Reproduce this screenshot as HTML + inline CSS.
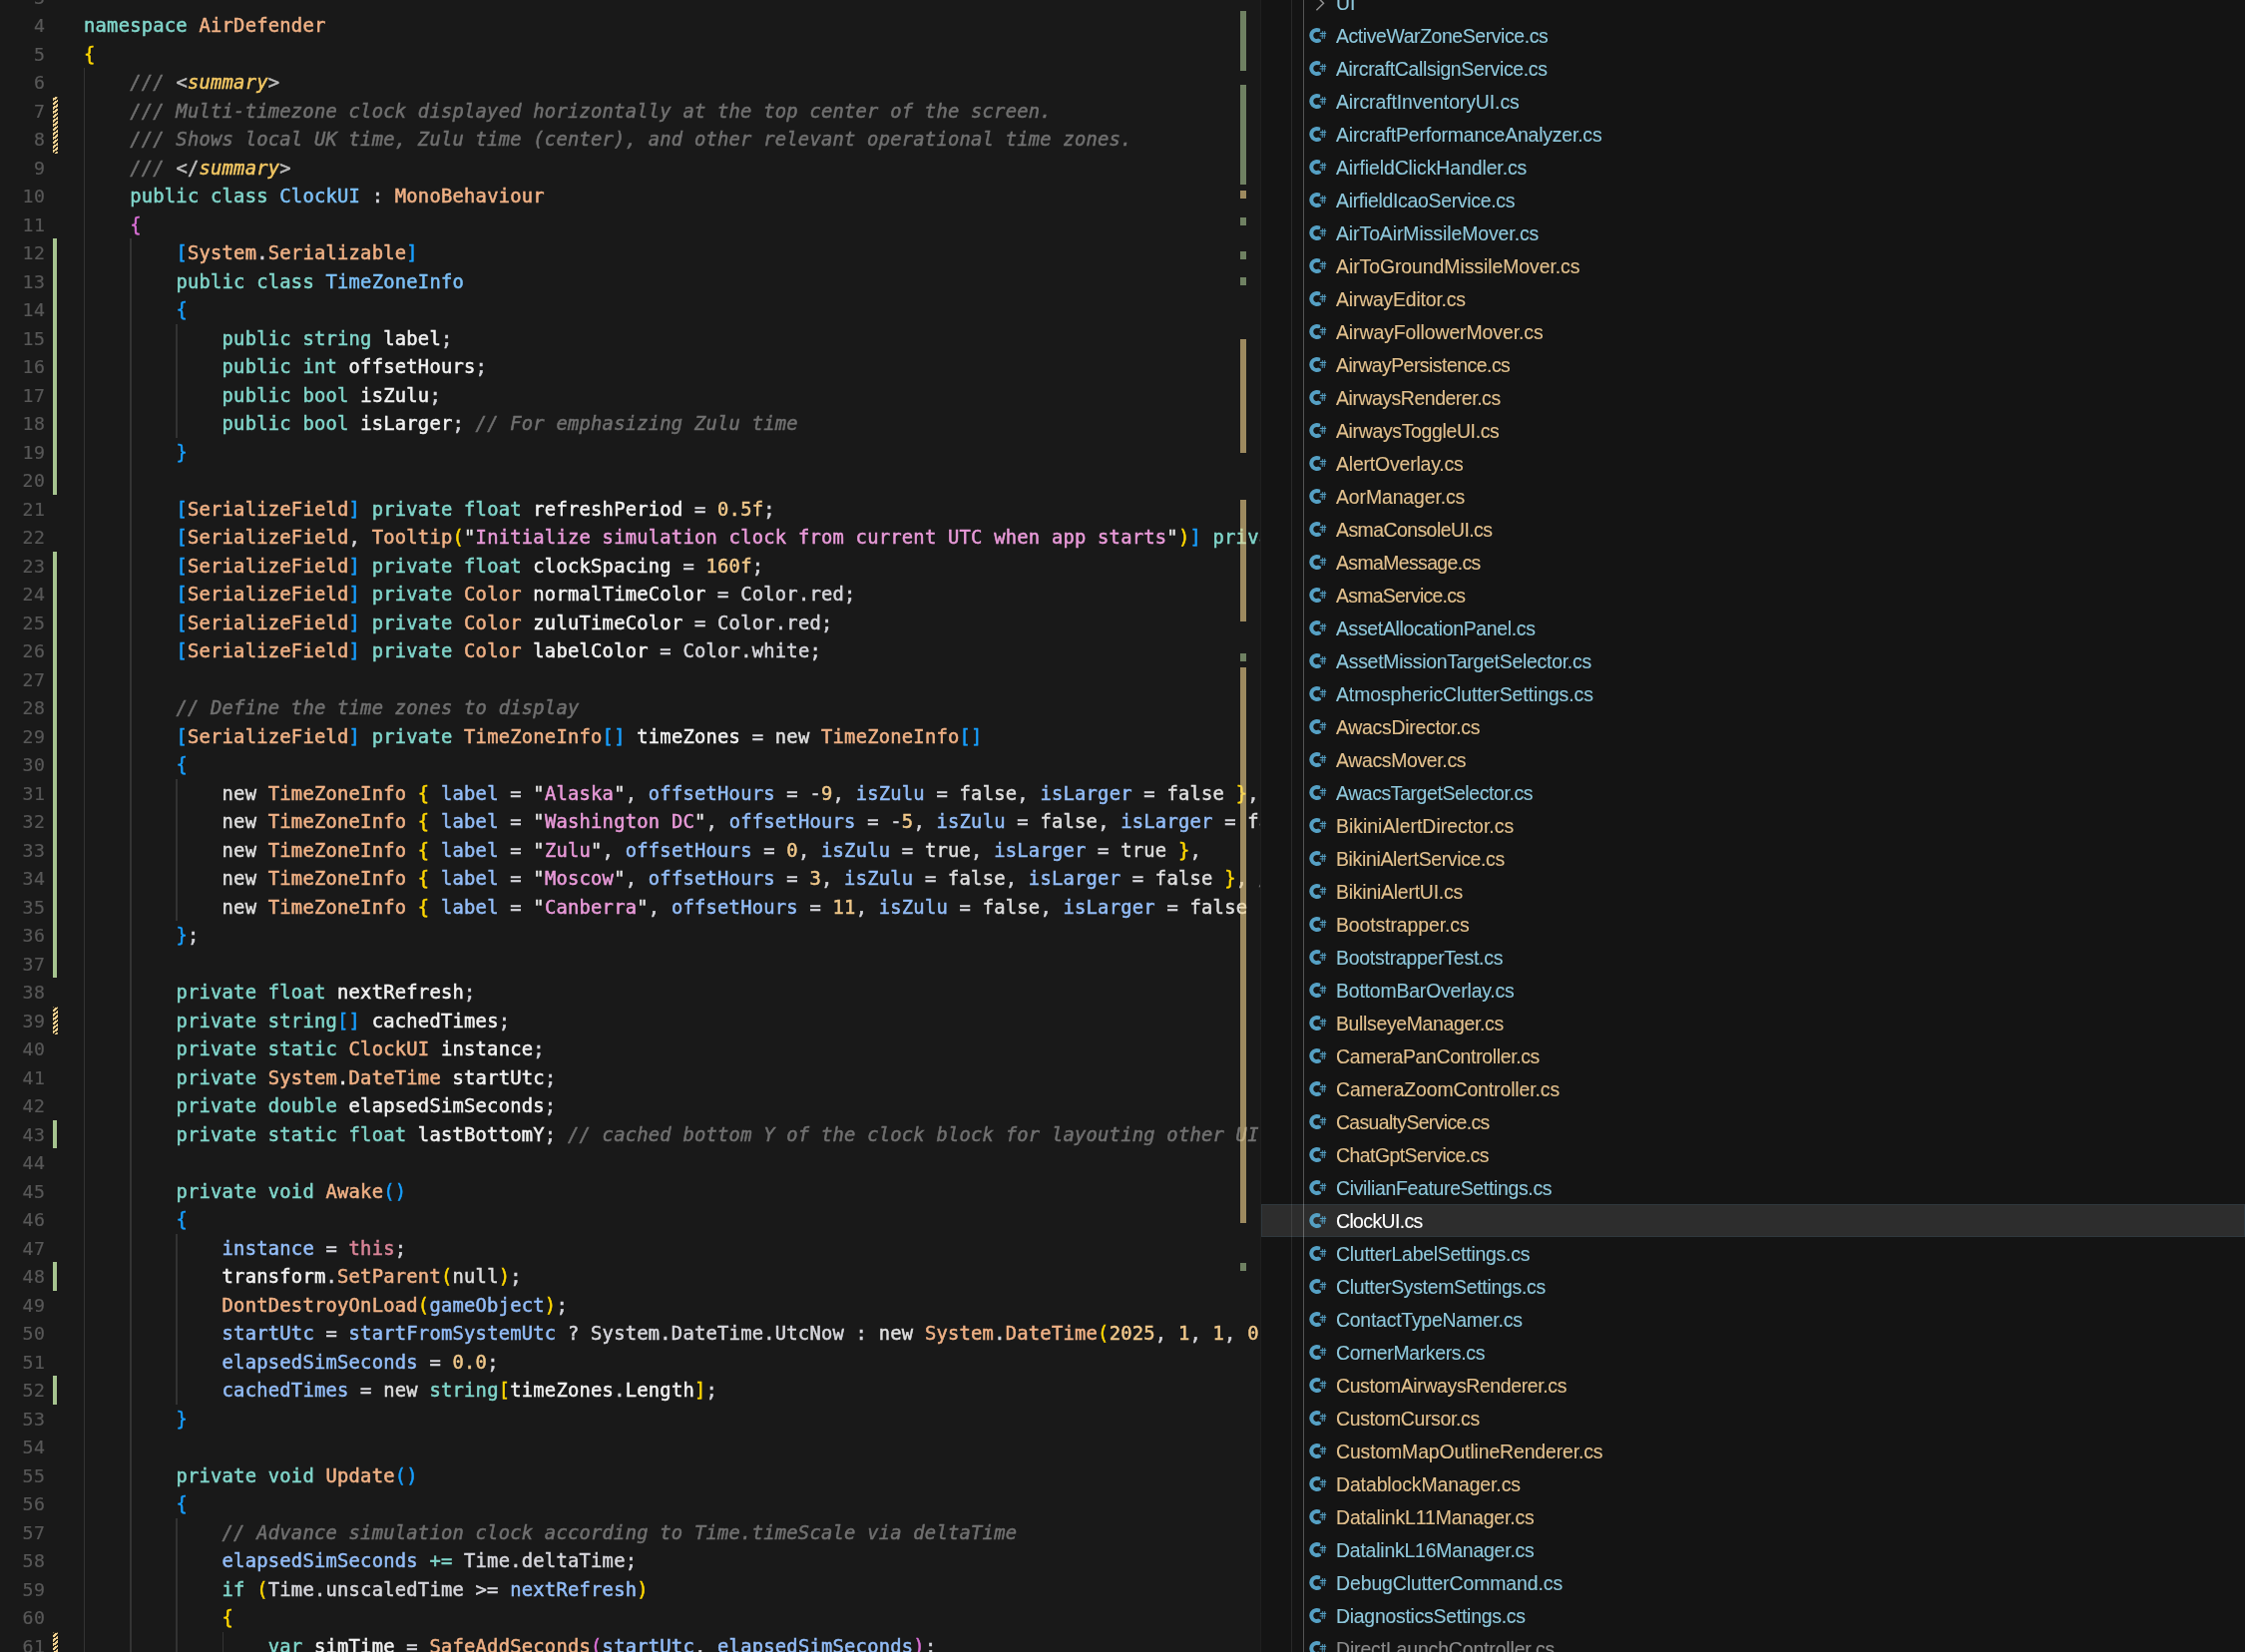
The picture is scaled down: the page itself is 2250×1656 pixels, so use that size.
<!DOCTYPE html>
<html lang="en"><head><meta charset="utf-8"><title>ClockUI.cs - AirDefender</title>
<style>

html,body{margin:0;padding:0;background:#191919;}
body{width:2250px;height:1656px;position:relative;overflow:hidden;}
#ed{position:absolute;left:0;top:0;width:1263px;height:1656px;background:#191919;overflow:hidden;}
#sb{position:absolute;left:1264px;top:0;width:986px;height:1656px;background:#141414;overflow:hidden;}
#sep{position:absolute;left:1263px;top:0;width:1px;height:1656px;background:#1f1f1f;}
.ln{position:absolute;left:0;width:45.5px;text-align:right;color:#585858;white-space:pre;}
.cl{position:absolute;white-space:pre;color:#d6d6dc;}
.ln,.cl{font-family:"DejaVu Sans Mono", "Liberation Mono", monospace;font-size:18.8px;letter-spacing:0.2385px;line-height:28.5px;height:28.5px;font-kerning:none;font-variant-ligatures:none;-webkit-text-stroke:0.5px;}
.ln{font-size:18.2px;letter-spacing:0.59px;-webkit-text-stroke:0.2px;}
.k{color:#80d6cb}.t{color:#f0b185}.c{color:#7cc0f7}.p{color:#93bdf8}.s{color:#e99ad9}.q{color:#e4e4e4}
.n{color:#f0c88a}.m{color:#707070;font-style:italic}.x{color:#f2c763;font-style:italic}
.xp{color:#bcbcbc}.nw{color:#dedede}.w{color:#f2f2f2}.g{color:#d6d6dc}.b1{color:#ffd700}.b2{color:#da70d6}.b3{color:#179fff}.th{color:#d98498}
.ig{position:absolute;width:1.4px;background:#333333;}
.ga{position:absolute;left:53px;width:4px;background:#a6c48f;}
.gm{position:absolute;left:52.5px;width:5.5px;background:repeating-linear-gradient(-36deg,#f0d090 0,#f0d090 2.1px,#2a2519 2.1px,#2a2519 3.5px);border-radius:1.5px;}
.ov{position:absolute;left:1243px;width:6px;}
.og{background:rgba(168,199,146,.6)}.ot{background:rgba(245,214,142,.6)}
.row{position:absolute;left:0;width:986px;height:33px;}
.row .nm{position:absolute;left:75px;top:0;height:33px;line-height:33px;white-space:pre;font-family:"Liberation Sans",sans-serif;font-size:19.4px;font-kerning:normal;-webkit-text-stroke:0.12px;}
.row svg{position:absolute;left:47px;top:7px;}
.u{color:#8ec8dc}.mo{color:#e2c08d}.ig2{color:#8c8c8c}.se{color:#ffffff}
.sel{background:#2d2d2d;box-shadow:inset 0 0 0 1px #2f383d;}
.gl{position:absolute;left:0;top:0;width:100%;height:100%;will-change:transform;}
.sg{position:absolute;top:0;width:1px;height:1656px;}

</style></head><body>
<div id="ed">
<div class="ga" style="top:239.0px;height:256.5px"></div>
<div class="ga" style="top:552.5px;height:427.5px"></div>
<div class="ga" style="top:1122.5px;height:28.5px"></div>
<div class="ga" style="top:1265.0px;height:28.5px"></div>
<div class="ga" style="top:1379.0px;height:28.5px"></div>
<div class="gm" style="top:96.5px;height:57.0px"></div>
<div class="gm" style="top:1008.5px;height:28.5px"></div>
<div class="gm" style="top:1635.5px;height:28.5px"></div>
<div class="ig" style="left:84.00px;top:68.0px;height:1596.0px"></div>
<div class="ig" style="left:130.18px;top:239.0px;height:1425.0px"></div>
<div class="ig" style="left:176.37px;top:324.5px;height:114.0px"></div>
<div class="ig" style="left:176.37px;top:780.5px;height:142.5px"></div>
<div class="ig" style="left:176.37px;top:1236.5px;height:171.0px"></div>
<div class="ig" style="left:176.37px;top:1521.5px;height:142.5px"></div>
<div class="ig" style="left:222.55px;top:1635.5px;height:28.5px"></div>
<div class="gl">
<div class="ln" style="top:-16.5px">3</div>
<div class="ln" style="top:12.0px">4</div>
<div class="cl" style="left:84px;top:12.0px"><span class="k">namespace</span> <span class="t">AirDefender</span></div>
<div class="ln" style="top:40.5px">5</div>
<div class="cl" style="left:84px;top:40.5px"><span class="b1">{</span></div>
<div class="ln" style="top:69.0px">6</div>
<div class="cl" style="left:84px;top:69.0px">    <span class="m">/// </span><span class="xp">&lt;</span><span class="x">summary</span><span class="xp">&gt;</span></div>
<div class="ln" style="top:97.5px">7</div>
<div class="cl" style="left:84px;top:97.5px">    <span class="m">/// Multi-timezone clock displayed horizontally at the top center of the screen.</span></div>
<div class="ln" style="top:126.0px">8</div>
<div class="cl" style="left:84px;top:126.0px">    <span class="m">/// Shows local UK time, Zulu time (center), and other relevant operational time zones.</span></div>
<div class="ln" style="top:154.5px">9</div>
<div class="cl" style="left:84px;top:154.5px">    <span class="m">/// </span><span class="xp">&lt;/</span><span class="x">summary</span><span class="xp">&gt;</span></div>
<div class="ln" style="top:183.0px">10</div>
<div class="cl" style="left:84px;top:183.0px">    <span class="k">public class </span><span class="c">ClockUI</span> : <span class="t">MonoBehaviour</span></div>
<div class="ln" style="top:211.5px">11</div>
<div class="cl" style="left:84px;top:211.5px">    <span class="b2">{</span></div>
<div class="ln" style="top:240.0px">12</div>
<div class="cl" style="left:84px;top:240.0px">        <span class="b3">[</span><span class="t">System</span>.<span class="t">Serializable</span><span class="b3">]</span></div>
<div class="ln" style="top:268.5px">13</div>
<div class="cl" style="left:84px;top:268.5px">        <span class="k">public class </span><span class="c">TimeZoneInfo</span></div>
<div class="ln" style="top:297.0px">14</div>
<div class="cl" style="left:84px;top:297.0px">        <span class="b3">{</span></div>
<div class="ln" style="top:325.5px">15</div>
<div class="cl" style="left:84px;top:325.5px">            <span class="k">public string </span><span class="w">label</span>;</div>
<div class="ln" style="top:354.0px">16</div>
<div class="cl" style="left:84px;top:354.0px">            <span class="k">public int </span><span class="w">offsetHours</span>;</div>
<div class="ln" style="top:382.5px">17</div>
<div class="cl" style="left:84px;top:382.5px">            <span class="k">public bool </span><span class="w">isZulu</span>;</div>
<div class="ln" style="top:411.0px">18</div>
<div class="cl" style="left:84px;top:411.0px">            <span class="k">public bool </span><span class="w">isLarger</span>; <span class="m">// For emphasizing Zulu time</span></div>
<div class="ln" style="top:439.5px">19</div>
<div class="cl" style="left:84px;top:439.5px">        <span class="b3">}</span></div>
<div class="ln" style="top:468.0px">20</div>
<div class="ln" style="top:496.5px">21</div>
<div class="cl" style="left:84px;top:496.5px">        <span class="b3">[</span><span class="t">SerializeField</span><span class="b3">]</span> <span class="k">private float </span><span class="w">refreshPeriod</span> = <span class="n">0.5f</span>;</div>
<div class="ln" style="top:525.0px">22</div>
<div class="cl" style="left:84px;top:525.0px">        <span class="b3">[</span><span class="t">SerializeField</span>, <span class="t">Tooltip</span><span class="b1">(</span><span class="q">"</span><span class="s">Initialize simulation clock from current UTC when app starts</span><span class="q">"</span><span class="b1">)</span><span class="b3">]</span> <span class="k">private bool </span><span class="w">startFromSystemUtc</span> = <span class="nw">true</span>;</div>
<div class="ln" style="top:553.5px">23</div>
<div class="cl" style="left:84px;top:553.5px">        <span class="b3">[</span><span class="t">SerializeField</span><span class="b3">]</span> <span class="k">private float </span><span class="w">clockSpacing</span> = <span class="n">160f</span>;</div>
<div class="ln" style="top:582.0px">24</div>
<div class="cl" style="left:84px;top:582.0px">        <span class="b3">[</span><span class="t">SerializeField</span><span class="b3">]</span> <span class="k">private </span><span class="t">Color</span> <span class="w">normalTimeColor</span> = Color.red;</div>
<div class="ln" style="top:610.5px">25</div>
<div class="cl" style="left:84px;top:610.5px">        <span class="b3">[</span><span class="t">SerializeField</span><span class="b3">]</span> <span class="k">private </span><span class="t">Color</span> <span class="w">zuluTimeColor</span> = Color.red;</div>
<div class="ln" style="top:639.0px">26</div>
<div class="cl" style="left:84px;top:639.0px">        <span class="b3">[</span><span class="t">SerializeField</span><span class="b3">]</span> <span class="k">private </span><span class="t">Color</span> <span class="w">labelColor</span> = Color.white;</div>
<div class="ln" style="top:667.5px">27</div>
<div class="ln" style="top:696.0px">28</div>
<div class="cl" style="left:84px;top:696.0px">        <span class="m">// Define the time zones to display</span></div>
<div class="ln" style="top:724.5px">29</div>
<div class="cl" style="left:84px;top:724.5px">        <span class="b3">[</span><span class="t">SerializeField</span><span class="b3">]</span> <span class="k">private </span><span class="t">TimeZoneInfo</span><span class="b3">[]</span> <span class="w">timeZones</span> = <span class="nw">new </span><span class="t">TimeZoneInfo</span><span class="b3">[]</span></div>
<div class="ln" style="top:753.0px">30</div>
<div class="cl" style="left:84px;top:753.0px">        <span class="b3">{</span></div>
<div class="ln" style="top:781.5px">31</div>
<div class="cl" style="left:84px;top:781.5px">            <span class="nw">new </span><span class="t">TimeZoneInfo</span> <span class="b1">{</span> <span class="p">label</span> = <span class="q">"</span><span class="s">Alaska</span><span class="q">"</span>, <span class="p">offsetHours</span> = -<span class="n">9</span>, <span class="p">isZulu</span> = <span class="nw">false</span>, <span class="p">isLarger</span> = <span class="nw">false</span> <span class="b1">}</span>,</div>
<div class="ln" style="top:810.0px">32</div>
<div class="cl" style="left:84px;top:810.0px">            <span class="nw">new </span><span class="t">TimeZoneInfo</span> <span class="b1">{</span> <span class="p">label</span> = <span class="q">"</span><span class="s">Washington DC</span><span class="q">"</span>, <span class="p">offsetHours</span> = -<span class="n">5</span>, <span class="p">isZulu</span> = <span class="nw">false</span>, <span class="p">isLarger</span> = <span class="nw">false</span> <span class="b1">}</span>,</div>
<div class="ln" style="top:838.5px">33</div>
<div class="cl" style="left:84px;top:838.5px">            <span class="nw">new </span><span class="t">TimeZoneInfo</span> <span class="b1">{</span> <span class="p">label</span> = <span class="q">"</span><span class="s">Zulu</span><span class="q">"</span>, <span class="p">offsetHours</span> = <span class="n">0</span>, <span class="p">isZulu</span> = <span class="nw">true</span>, <span class="p">isLarger</span> = <span class="nw">true</span> <span class="b1">}</span>,</div>
<div class="ln" style="top:867.0px">34</div>
<div class="cl" style="left:84px;top:867.0px">            <span class="nw">new </span><span class="t">TimeZoneInfo</span> <span class="b1">{</span> <span class="p">label</span> = <span class="q">"</span><span class="s">Moscow</span><span class="q">"</span>, <span class="p">offsetHours</span> = <span class="n">3</span>, <span class="p">isZulu</span> = <span class="nw">false</span>, <span class="p">isLarger</span> = <span class="nw">false</span> <span class="b1">}</span>, <span class="m">// UTC+3</span></div>
<div class="ln" style="top:895.5px">35</div>
<div class="cl" style="left:84px;top:895.5px">            <span class="nw">new </span><span class="t">TimeZoneInfo</span> <span class="b1">{</span> <span class="p">label</span> = <span class="q">"</span><span class="s">Canberra</span><span class="q">"</span>, <span class="p">offsetHours</span> = <span class="n">11</span>, <span class="p">isZulu</span> = <span class="nw">false</span>, <span class="p">isLarger</span> = <span class="nw">false</span> <span class="b1">}</span></div>
<div class="ln" style="top:924.0px">36</div>
<div class="cl" style="left:84px;top:924.0px">        <span class="b3">}</span>;</div>
<div class="ln" style="top:952.5px">37</div>
<div class="ln" style="top:981.0px">38</div>
<div class="cl" style="left:84px;top:981.0px">        <span class="k">private float </span><span class="w">nextRefresh</span>;</div>
<div class="ln" style="top:1009.5px">39</div>
<div class="cl" style="left:84px;top:1009.5px">        <span class="k">private string</span><span class="b3">[]</span> <span class="w">cachedTimes</span>;</div>
<div class="ln" style="top:1038.0px">40</div>
<div class="cl" style="left:84px;top:1038.0px">        <span class="k">private static </span><span class="t">ClockUI</span> <span class="w">instance</span>;</div>
<div class="ln" style="top:1066.5px">41</div>
<div class="cl" style="left:84px;top:1066.5px">        <span class="k">private </span><span class="t">System</span><span class="w">.</span><span class="t">DateTime</span> <span class="w">startUtc</span>;</div>
<div class="ln" style="top:1095.0px">42</div>
<div class="cl" style="left:84px;top:1095.0px">        <span class="k">private double </span><span class="w">elapsedSimSeconds</span>;</div>
<div class="ln" style="top:1123.5px">43</div>
<div class="cl" style="left:84px;top:1123.5px">        <span class="k">private static float </span><span class="w">lastBottomY</span>; <span class="m">// cached bottom Y of the clock block for layouting other UI elements</span></div>
<div class="ln" style="top:1152.0px">44</div>
<div class="ln" style="top:1180.5px">45</div>
<div class="cl" style="left:84px;top:1180.5px">        <span class="k">private void </span><span class="t">Awake</span><span class="b3">()</span></div>
<div class="ln" style="top:1209.0px">46</div>
<div class="cl" style="left:84px;top:1209.0px">        <span class="b3">{</span></div>
<div class="ln" style="top:1237.5px">47</div>
<div class="cl" style="left:84px;top:1237.5px">            <span class="p">instance</span> = <span class="th">this</span>;</div>
<div class="ln" style="top:1266.0px">48</div>
<div class="cl" style="left:84px;top:1266.0px">            <span class="w">transform</span>.<span class="t">SetParent</span><span class="b1">(</span><span class="nw">null</span><span class="b1">)</span>;</div>
<div class="ln" style="top:1294.5px">49</div>
<div class="cl" style="left:84px;top:1294.5px">            <span class="t">DontDestroyOnLoad</span><span class="b1">(</span><span class="p">gameObject</span><span class="b1">)</span>;</div>
<div class="ln" style="top:1323.0px">50</div>
<div class="cl" style="left:84px;top:1323.0px">            <span class="p">startUtc</span> = <span class="p">startFromSystemUtc</span> ? System.DateTime.UtcNow : <span class="nw">new </span><span class="t">System</span>.<span class="t">DateTime</span><span class="b1">(</span><span class="n">2025</span>, <span class="n">1</span>, <span class="n">1</span>, <span class="n">0</span>, <span class="n">0</span>, <span class="n">0</span><span class="b1">)</span>;</div>
<div class="ln" style="top:1351.5px">51</div>
<div class="cl" style="left:84px;top:1351.5px">            <span class="p">elapsedSimSeconds</span> = <span class="n">0.0</span>;</div>
<div class="ln" style="top:1380.0px">52</div>
<div class="cl" style="left:84px;top:1380.0px">            <span class="p">cachedTimes</span> = <span class="nw">new </span><span class="k">string</span><span class="b1">[</span><span class="w">timeZones</span>.<span class="w">Length</span><span class="b1">]</span>;</div>
<div class="ln" style="top:1408.5px">53</div>
<div class="cl" style="left:84px;top:1408.5px">        <span class="b3">}</span></div>
<div class="ln" style="top:1437.0px">54</div>
<div class="ln" style="top:1465.5px">55</div>
<div class="cl" style="left:84px;top:1465.5px">        <span class="k">private void </span><span class="t">Update</span><span class="b3">()</span></div>
<div class="ln" style="top:1494.0px">56</div>
<div class="cl" style="left:84px;top:1494.0px">        <span class="b3">{</span></div>
<div class="ln" style="top:1522.5px">57</div>
<div class="cl" style="left:84px;top:1522.5px">            <span class="m">// Advance simulation clock according to Time.timeScale via deltaTime</span></div>
<div class="ln" style="top:1551.0px">58</div>
<div class="cl" style="left:84px;top:1551.0px">            <span class="p">elapsedSimSeconds</span> <span class="k">+=</span> Time.deltaTime;</div>
<div class="ln" style="top:1579.5px">59</div>
<div class="cl" style="left:84px;top:1579.5px">            <span class="k">if</span> <span class="b1">(</span>Time.unscaledTime &gt;= <span class="p">nextRefresh</span><span class="b1">)</span></div>
<div class="ln" style="top:1608.0px">60</div>
<div class="cl" style="left:84px;top:1608.0px">            <span class="b1">{</span></div>
<div class="ln" style="top:1636.5px">61</div>
<div class="cl" style="left:84px;top:1636.5px">                <span class="k">var</span> <span class="w">simTime</span> = <span class="t">SafeAddSeconds</span><span class="b2">(</span><span class="p">startUtc</span>, <span class="p">elapsedSimSeconds</span><span class="b2">)</span>;</div>
</div>
<div class="ov og" style="top:10.7px;height:60.2px"></div>
<div class="ov og" style="top:84.9px;height:100.2px"></div>
<div class="ov ot" style="top:190.7px;height:8.4px"></div>
<div class="ov og" style="top:217.9px;height:8.1px"></div>
<div class="ov og" style="top:252.0px;height:8.1px"></div>
<div class="ov og" style="top:277.9px;height:8.1px"></div>
<div class="ov ot" style="top:339.8px;height:114.2px"></div>
<div class="ov ot" style="top:501.0px;height:121.6px"></div>
<div class="ov og" style="top:654.6px;height:8.1px"></div>
<div class="ov ot" style="top:669.1px;height:556.9px"></div>
<div class="ov og" style="top:1265.7px;height:8.1px"></div>
</div>
<div id="sep"></div>
<div id="sb">
<div class="gl">
<div class="row" style="top:-14.5px"><svg style="left:52px;top:4px" width="16" height="24" viewBox="0 0 16 24" fill="none"><path d="M3.4 6.1L10.5 13.2 3.4 20.3" stroke="#8f8f8f" stroke-width="1.5" fill="none"/></svg><span class="nm u" style="top:1px">UI</span></div>
<div class="row" style="top:18.5px"><svg width="20" height="20" viewBox="0 0 20 20"><path d="M12.2 2.79A7.5 7.5 0 1 0 12.9 15.7L12.9 13.65 10.23 12.62A3.5 3.5 0 1 1 10.23 6.28L12.2 5.6Z" fill="#55a0c4"/><path d="M14.55 4.9L14.25 12.9M16.65 4.9L16.35 12.9" stroke="#55a0c4" stroke-width="1.25" stroke-opacity=".7" fill="none"/><path d="M11.8 7.45H18.2" stroke="#55a0c4" stroke-width="1.25" fill="none"/><path d="M11.5 9.95H17.7" stroke="#55a0c4" stroke-width="1.1" stroke-opacity=".8" fill="none"/></svg><span class="nm u" style="top:1px;letter-spacing:-0.389px">ActiveWarZoneService.cs</span></div>
<div class="row" style="top:51.5px"><svg width="20" height="20" viewBox="0 0 20 20"><path d="M12.2 2.79A7.5 7.5 0 1 0 12.9 15.7L12.9 13.65 10.23 12.62A3.5 3.5 0 1 1 10.23 6.28L12.2 5.6Z" fill="#55a0c4"/><path d="M14.55 4.9L14.25 12.9M16.65 4.9L16.35 12.9" stroke="#55a0c4" stroke-width="1.25" stroke-opacity=".7" fill="none"/><path d="M11.8 7.45H18.2" stroke="#55a0c4" stroke-width="1.25" fill="none"/><path d="M11.5 9.95H17.7" stroke="#55a0c4" stroke-width="1.1" stroke-opacity=".8" fill="none"/></svg><span class="nm u" style="top:1px;letter-spacing:-0.317px">AircraftCallsignService.cs</span></div>
<div class="row" style="top:84.5px"><svg width="20" height="20" viewBox="0 0 20 20"><path d="M12.2 2.79A7.5 7.5 0 1 0 12.9 15.7L12.9 13.65 10.23 12.62A3.5 3.5 0 1 1 10.23 6.28L12.2 5.6Z" fill="#55a0c4"/><path d="M14.55 4.9L14.25 12.9M16.65 4.9L16.35 12.9" stroke="#55a0c4" stroke-width="1.25" stroke-opacity=".7" fill="none"/><path d="M11.8 7.45H18.2" stroke="#55a0c4" stroke-width="1.25" fill="none"/><path d="M11.5 9.95H17.7" stroke="#55a0c4" stroke-width="1.1" stroke-opacity=".8" fill="none"/></svg><span class="nm u" style="top:1px;letter-spacing:-0.078px">AircraftInventoryUI.cs</span></div>
<div class="row" style="top:117.5px"><svg width="20" height="20" viewBox="0 0 20 20"><path d="M12.2 2.79A7.5 7.5 0 1 0 12.9 15.7L12.9 13.65 10.23 12.62A3.5 3.5 0 1 1 10.23 6.28L12.2 5.6Z" fill="#55a0c4"/><path d="M14.55 4.9L14.25 12.9M16.65 4.9L16.35 12.9" stroke="#55a0c4" stroke-width="1.25" stroke-opacity=".7" fill="none"/><path d="M11.8 7.45H18.2" stroke="#55a0c4" stroke-width="1.25" fill="none"/><path d="M11.5 9.95H17.7" stroke="#55a0c4" stroke-width="1.1" stroke-opacity=".8" fill="none"/></svg><span class="nm u" style="top:1px;letter-spacing:-0.172px">AircraftPerformanceAnalyzer.cs</span></div>
<div class="row" style="top:150.5px"><svg width="20" height="20" viewBox="0 0 20 20"><path d="M12.2 2.79A7.5 7.5 0 1 0 12.9 15.7L12.9 13.65 10.23 12.62A3.5 3.5 0 1 1 10.23 6.28L12.2 5.6Z" fill="#55a0c4"/><path d="M14.55 4.9L14.25 12.9M16.65 4.9L16.35 12.9" stroke="#55a0c4" stroke-width="1.25" stroke-opacity=".7" fill="none"/><path d="M11.8 7.45H18.2" stroke="#55a0c4" stroke-width="1.25" fill="none"/><path d="M11.5 9.95H17.7" stroke="#55a0c4" stroke-width="1.1" stroke-opacity=".8" fill="none"/></svg><span class="nm u" style="top:1px;letter-spacing:-0.073px">AirfieldClickHandler.cs</span></div>
<div class="row" style="top:183.5px"><svg width="20" height="20" viewBox="0 0 20 20"><path d="M12.2 2.79A7.5 7.5 0 1 0 12.9 15.7L12.9 13.65 10.23 12.62A3.5 3.5 0 1 1 10.23 6.28L12.2 5.6Z" fill="#55a0c4"/><path d="M14.55 4.9L14.25 12.9M16.65 4.9L16.35 12.9" stroke="#55a0c4" stroke-width="1.25" stroke-opacity=".7" fill="none"/><path d="M11.8 7.45H18.2" stroke="#55a0c4" stroke-width="1.25" fill="none"/><path d="M11.5 9.95H17.7" stroke="#55a0c4" stroke-width="1.1" stroke-opacity=".8" fill="none"/></svg><span class="nm u" style="top:1px;letter-spacing:-0.284px">AirfieldIcaoService.cs</span></div>
<div class="row" style="top:216.5px"><svg width="20" height="20" viewBox="0 0 20 20"><path d="M12.2 2.79A7.5 7.5 0 1 0 12.9 15.7L12.9 13.65 10.23 12.62A3.5 3.5 0 1 1 10.23 6.28L12.2 5.6Z" fill="#55a0c4"/><path d="M14.55 4.9L14.25 12.9M16.65 4.9L16.35 12.9" stroke="#55a0c4" stroke-width="1.25" stroke-opacity=".7" fill="none"/><path d="M11.8 7.45H18.2" stroke="#55a0c4" stroke-width="1.25" fill="none"/><path d="M11.5 9.95H17.7" stroke="#55a0c4" stroke-width="1.1" stroke-opacity=".8" fill="none"/></svg><span class="nm u" style="top:1px;letter-spacing:-0.064px">AirToAirMissileMover.cs</span></div>
<div class="row" style="top:249.5px"><svg width="20" height="20" viewBox="0 0 20 20"><path d="M12.2 2.79A7.5 7.5 0 1 0 12.9 15.7L12.9 13.65 10.23 12.62A3.5 3.5 0 1 1 10.23 6.28L12.2 5.6Z" fill="#55a0c4"/><path d="M14.55 4.9L14.25 12.9M16.65 4.9L16.35 12.9" stroke="#55a0c4" stroke-width="1.25" stroke-opacity=".7" fill="none"/><path d="M11.8 7.45H18.2" stroke="#55a0c4" stroke-width="1.25" fill="none"/><path d="M11.5 9.95H17.7" stroke="#55a0c4" stroke-width="1.1" stroke-opacity=".8" fill="none"/></svg><span class="nm mo" style="top:1px;letter-spacing:-0.052px">AirToGroundMissileMover.cs</span></div>
<div class="row" style="top:282.5px"><svg width="20" height="20" viewBox="0 0 20 20"><path d="M12.2 2.79A7.5 7.5 0 1 0 12.9 15.7L12.9 13.65 10.23 12.62A3.5 3.5 0 1 1 10.23 6.28L12.2 5.6Z" fill="#55a0c4"/><path d="M14.55 4.9L14.25 12.9M16.65 4.9L16.35 12.9" stroke="#55a0c4" stroke-width="1.25" stroke-opacity=".7" fill="none"/><path d="M11.8 7.45H18.2" stroke="#55a0c4" stroke-width="1.25" fill="none"/><path d="M11.5 9.95H17.7" stroke="#55a0c4" stroke-width="1.1" stroke-opacity=".8" fill="none"/></svg><span class="nm mo" style="top:1px;letter-spacing:-0.182px">AirwayEditor.cs</span></div>
<div class="row" style="top:315.5px"><svg width="20" height="20" viewBox="0 0 20 20"><path d="M12.2 2.79A7.5 7.5 0 1 0 12.9 15.7L12.9 13.65 10.23 12.62A3.5 3.5 0 1 1 10.23 6.28L12.2 5.6Z" fill="#55a0c4"/><path d="M14.55 4.9L14.25 12.9M16.65 4.9L16.35 12.9" stroke="#55a0c4" stroke-width="1.25" stroke-opacity=".7" fill="none"/><path d="M11.8 7.45H18.2" stroke="#55a0c4" stroke-width="1.25" fill="none"/><path d="M11.5 9.95H17.7" stroke="#55a0c4" stroke-width="1.1" stroke-opacity=".8" fill="none"/></svg><span class="nm mo" style="top:1px;letter-spacing:-0.069px">AirwayFollowerMover.cs</span></div>
<div class="row" style="top:348.5px"><svg width="20" height="20" viewBox="0 0 20 20"><path d="M12.2 2.79A7.5 7.5 0 1 0 12.9 15.7L12.9 13.65 10.23 12.62A3.5 3.5 0 1 1 10.23 6.28L12.2 5.6Z" fill="#55a0c4"/><path d="M14.55 4.9L14.25 12.9M16.65 4.9L16.35 12.9" stroke="#55a0c4" stroke-width="1.25" stroke-opacity=".7" fill="none"/><path d="M11.8 7.45H18.2" stroke="#55a0c4" stroke-width="1.25" fill="none"/><path d="M11.5 9.95H17.7" stroke="#55a0c4" stroke-width="1.1" stroke-opacity=".8" fill="none"/></svg><span class="nm mo" style="top:1px;letter-spacing:-0.499px">AirwayPersistence.cs</span></div>
<div class="row" style="top:381.5px"><svg width="20" height="20" viewBox="0 0 20 20"><path d="M12.2 2.79A7.5 7.5 0 1 0 12.9 15.7L12.9 13.65 10.23 12.62A3.5 3.5 0 1 1 10.23 6.28L12.2 5.6Z" fill="#55a0c4"/><path d="M14.55 4.9L14.25 12.9M16.65 4.9L16.35 12.9" stroke="#55a0c4" stroke-width="1.25" stroke-opacity=".7" fill="none"/><path d="M11.8 7.45H18.2" stroke="#55a0c4" stroke-width="1.25" fill="none"/><path d="M11.5 9.95H17.7" stroke="#55a0c4" stroke-width="1.1" stroke-opacity=".8" fill="none"/></svg><span class="nm mo" style="top:1px;letter-spacing:-0.432px">AirwaysRenderer.cs</span></div>
<div class="row" style="top:414.5px"><svg width="20" height="20" viewBox="0 0 20 20"><path d="M12.2 2.79A7.5 7.5 0 1 0 12.9 15.7L12.9 13.65 10.23 12.62A3.5 3.5 0 1 1 10.23 6.28L12.2 5.6Z" fill="#55a0c4"/><path d="M14.55 4.9L14.25 12.9M16.65 4.9L16.35 12.9" stroke="#55a0c4" stroke-width="1.25" stroke-opacity=".7" fill="none"/><path d="M11.8 7.45H18.2" stroke="#55a0c4" stroke-width="1.25" fill="none"/><path d="M11.5 9.95H17.7" stroke="#55a0c4" stroke-width="1.1" stroke-opacity=".8" fill="none"/></svg><span class="nm mo" style="top:1px;letter-spacing:-0.317px">AirwaysToggleUI.cs</span></div>
<div class="row" style="top:447.5px"><svg width="20" height="20" viewBox="0 0 20 20"><path d="M12.2 2.79A7.5 7.5 0 1 0 12.9 15.7L12.9 13.65 10.23 12.62A3.5 3.5 0 1 1 10.23 6.28L12.2 5.6Z" fill="#55a0c4"/><path d="M14.55 4.9L14.25 12.9M16.65 4.9L16.35 12.9" stroke="#55a0c4" stroke-width="1.25" stroke-opacity=".7" fill="none"/><path d="M11.8 7.45H18.2" stroke="#55a0c4" stroke-width="1.25" fill="none"/><path d="M11.5 9.95H17.7" stroke="#55a0c4" stroke-width="1.1" stroke-opacity=".8" fill="none"/></svg><span class="nm mo" style="top:1px;letter-spacing:-0.158px">AlertOverlay.cs</span></div>
<div class="row" style="top:480.5px"><svg width="20" height="20" viewBox="0 0 20 20"><path d="M12.2 2.79A7.5 7.5 0 1 0 12.9 15.7L12.9 13.65 10.23 12.62A3.5 3.5 0 1 1 10.23 6.28L12.2 5.6Z" fill="#55a0c4"/><path d="M14.55 4.9L14.25 12.9M16.65 4.9L16.35 12.9" stroke="#55a0c4" stroke-width="1.25" stroke-opacity=".7" fill="none"/><path d="M11.8 7.45H18.2" stroke="#55a0c4" stroke-width="1.25" fill="none"/><path d="M11.5 9.95H17.7" stroke="#55a0c4" stroke-width="1.1" stroke-opacity=".8" fill="none"/></svg><span class="nm mo" style="top:1px;letter-spacing:-0.093px">AorManager.cs</span></div>
<div class="row" style="top:513.5px"><svg width="20" height="20" viewBox="0 0 20 20"><path d="M12.2 2.79A7.5 7.5 0 1 0 12.9 15.7L12.9 13.65 10.23 12.62A3.5 3.5 0 1 1 10.23 6.28L12.2 5.6Z" fill="#55a0c4"/><path d="M14.55 4.9L14.25 12.9M16.65 4.9L16.35 12.9" stroke="#55a0c4" stroke-width="1.25" stroke-opacity=".7" fill="none"/><path d="M11.8 7.45H18.2" stroke="#55a0c4" stroke-width="1.25" fill="none"/><path d="M11.5 9.95H17.7" stroke="#55a0c4" stroke-width="1.1" stroke-opacity=".8" fill="none"/></svg><span class="nm mo" style="top:1px;letter-spacing:-0.526px">AsmaConsoleUI.cs</span></div>
<div class="row" style="top:546.5px"><svg width="20" height="20" viewBox="0 0 20 20"><path d="M12.2 2.79A7.5 7.5 0 1 0 12.9 15.7L12.9 13.65 10.23 12.62A3.5 3.5 0 1 1 10.23 6.28L12.2 5.6Z" fill="#55a0c4"/><path d="M14.55 4.9L14.25 12.9M16.65 4.9L16.35 12.9" stroke="#55a0c4" stroke-width="1.25" stroke-opacity=".7" fill="none"/><path d="M11.8 7.45H18.2" stroke="#55a0c4" stroke-width="1.25" fill="none"/><path d="M11.5 9.95H17.7" stroke="#55a0c4" stroke-width="1.1" stroke-opacity=".8" fill="none"/></svg><span class="nm mo" style="top:1px;letter-spacing:-0.595px">AsmaMessage.cs</span></div>
<div class="row" style="top:579.5px"><svg width="20" height="20" viewBox="0 0 20 20"><path d="M12.2 2.79A7.5 7.5 0 1 0 12.9 15.7L12.9 13.65 10.23 12.62A3.5 3.5 0 1 1 10.23 6.28L12.2 5.6Z" fill="#55a0c4"/><path d="M14.55 4.9L14.25 12.9M16.65 4.9L16.35 12.9" stroke="#55a0c4" stroke-width="1.25" stroke-opacity=".7" fill="none"/><path d="M11.8 7.45H18.2" stroke="#55a0c4" stroke-width="1.25" fill="none"/><path d="M11.5 9.95H17.7" stroke="#55a0c4" stroke-width="1.1" stroke-opacity=".8" fill="none"/></svg><span class="nm mo" style="top:1px;letter-spacing:-0.694px">AsmaService.cs</span></div>
<div class="row" style="top:612.5px"><svg width="20" height="20" viewBox="0 0 20 20"><path d="M12.2 2.79A7.5 7.5 0 1 0 12.9 15.7L12.9 13.65 10.23 12.62A3.5 3.5 0 1 1 10.23 6.28L12.2 5.6Z" fill="#55a0c4"/><path d="M14.55 4.9L14.25 12.9M16.65 4.9L16.35 12.9" stroke="#55a0c4" stroke-width="1.25" stroke-opacity=".7" fill="none"/><path d="M11.8 7.45H18.2" stroke="#55a0c4" stroke-width="1.25" fill="none"/><path d="M11.5 9.95H17.7" stroke="#55a0c4" stroke-width="1.1" stroke-opacity=".8" fill="none"/></svg><span class="nm u" style="top:1px;letter-spacing:-0.321px">AssetAllocationPanel.cs</span></div>
<div class="row" style="top:645.5px"><svg width="20" height="20" viewBox="0 0 20 20"><path d="M12.2 2.79A7.5 7.5 0 1 0 12.9 15.7L12.9 13.65 10.23 12.62A3.5 3.5 0 1 1 10.23 6.28L12.2 5.6Z" fill="#55a0c4"/><path d="M14.55 4.9L14.25 12.9M16.65 4.9L16.35 12.9" stroke="#55a0c4" stroke-width="1.25" stroke-opacity=".7" fill="none"/><path d="M11.8 7.45H18.2" stroke="#55a0c4" stroke-width="1.25" fill="none"/><path d="M11.5 9.95H17.7" stroke="#55a0c4" stroke-width="1.1" stroke-opacity=".8" fill="none"/></svg><span class="nm u" style="top:1px;letter-spacing:-0.245px">AssetMissionTargetSelector.cs</span></div>
<div class="row" style="top:678.5px"><svg width="20" height="20" viewBox="0 0 20 20"><path d="M12.2 2.79A7.5 7.5 0 1 0 12.9 15.7L12.9 13.65 10.23 12.62A3.5 3.5 0 1 1 10.23 6.28L12.2 5.6Z" fill="#55a0c4"/><path d="M14.55 4.9L14.25 12.9M16.65 4.9L16.35 12.9" stroke="#55a0c4" stroke-width="1.25" stroke-opacity=".7" fill="none"/><path d="M11.8 7.45H18.2" stroke="#55a0c4" stroke-width="1.25" fill="none"/><path d="M11.5 9.95H17.7" stroke="#55a0c4" stroke-width="1.1" stroke-opacity=".8" fill="none"/></svg><span class="nm u" style="top:1px;letter-spacing:-0.066px">AtmosphericClutterSettings.cs</span></div>
<div class="row" style="top:711.5px"><svg width="20" height="20" viewBox="0 0 20 20"><path d="M12.2 2.79A7.5 7.5 0 1 0 12.9 15.7L12.9 13.65 10.23 12.62A3.5 3.5 0 1 1 10.23 6.28L12.2 5.6Z" fill="#55a0c4"/><path d="M14.55 4.9L14.25 12.9M16.65 4.9L16.35 12.9" stroke="#55a0c4" stroke-width="1.25" stroke-opacity=".7" fill="none"/><path d="M11.8 7.45H18.2" stroke="#55a0c4" stroke-width="1.25" fill="none"/><path d="M11.5 9.95H17.7" stroke="#55a0c4" stroke-width="1.1" stroke-opacity=".8" fill="none"/></svg><span class="nm mo" style="top:1px;letter-spacing:-0.257px">AwacsDirector.cs</span></div>
<div class="row" style="top:744.5px"><svg width="20" height="20" viewBox="0 0 20 20"><path d="M12.2 2.79A7.5 7.5 0 1 0 12.9 15.7L12.9 13.65 10.23 12.62A3.5 3.5 0 1 1 10.23 6.28L12.2 5.6Z" fill="#55a0c4"/><path d="M14.55 4.9L14.25 12.9M16.65 4.9L16.35 12.9" stroke="#55a0c4" stroke-width="1.25" stroke-opacity=".7" fill="none"/><path d="M11.8 7.45H18.2" stroke="#55a0c4" stroke-width="1.25" fill="none"/><path d="M11.5 9.95H17.7" stroke="#55a0c4" stroke-width="1.1" stroke-opacity=".8" fill="none"/></svg><span class="nm mo" style="top:1px;letter-spacing:-0.320px">AwacsMover.cs</span></div>
<div class="row" style="top:777.5px"><svg width="20" height="20" viewBox="0 0 20 20"><path d="M12.2 2.79A7.5 7.5 0 1 0 12.9 15.7L12.9 13.65 10.23 12.62A3.5 3.5 0 1 1 10.23 6.28L12.2 5.6Z" fill="#55a0c4"/><path d="M14.55 4.9L14.25 12.9M16.65 4.9L16.35 12.9" stroke="#55a0c4" stroke-width="1.25" stroke-opacity=".7" fill="none"/><path d="M11.8 7.45H18.2" stroke="#55a0c4" stroke-width="1.25" fill="none"/><path d="M11.5 9.95H17.7" stroke="#55a0c4" stroke-width="1.1" stroke-opacity=".8" fill="none"/></svg><span class="nm u" style="top:1px;letter-spacing:-0.386px">AwacsTargetSelector.cs</span></div>
<div class="row" style="top:810.5px"><svg width="20" height="20" viewBox="0 0 20 20"><path d="M12.2 2.79A7.5 7.5 0 1 0 12.9 15.7L12.9 13.65 10.23 12.62A3.5 3.5 0 1 1 10.23 6.28L12.2 5.6Z" fill="#55a0c4"/><path d="M14.55 4.9L14.25 12.9M16.65 4.9L16.35 12.9" stroke="#55a0c4" stroke-width="1.25" stroke-opacity=".7" fill="none"/><path d="M11.8 7.45H18.2" stroke="#55a0c4" stroke-width="1.25" fill="none"/><path d="M11.5 9.95H17.7" stroke="#55a0c4" stroke-width="1.1" stroke-opacity=".8" fill="none"/></svg><span class="nm mo" style="top:1px;letter-spacing:0.014px">BikiniAlertDirector.cs</span></div>
<div class="row" style="top:843.5px"><svg width="20" height="20" viewBox="0 0 20 20"><path d="M12.2 2.79A7.5 7.5 0 1 0 12.9 15.7L12.9 13.65 10.23 12.62A3.5 3.5 0 1 1 10.23 6.28L12.2 5.6Z" fill="#55a0c4"/><path d="M14.55 4.9L14.25 12.9M16.65 4.9L16.35 12.9" stroke="#55a0c4" stroke-width="1.25" stroke-opacity=".7" fill="none"/><path d="M11.8 7.45H18.2" stroke="#55a0c4" stroke-width="1.25" fill="none"/><path d="M11.5 9.95H17.7" stroke="#55a0c4" stroke-width="1.1" stroke-opacity=".8" fill="none"/></svg><span class="nm mo" style="top:1px;letter-spacing:-0.323px">BikiniAlertService.cs</span></div>
<div class="row" style="top:876.5px"><svg width="20" height="20" viewBox="0 0 20 20"><path d="M12.2 2.79A7.5 7.5 0 1 0 12.9 15.7L12.9 13.65 10.23 12.62A3.5 3.5 0 1 1 10.23 6.28L12.2 5.6Z" fill="#55a0c4"/><path d="M14.55 4.9L14.25 12.9M16.65 4.9L16.35 12.9" stroke="#55a0c4" stroke-width="1.25" stroke-opacity=".7" fill="none"/><path d="M11.8 7.45H18.2" stroke="#55a0c4" stroke-width="1.25" fill="none"/><path d="M11.5 9.95H17.7" stroke="#55a0c4" stroke-width="1.1" stroke-opacity=".8" fill="none"/></svg><span class="nm mo" style="top:1px;letter-spacing:-0.213px">BikiniAlertUI.cs</span></div>
<div class="row" style="top:909.5px"><svg width="20" height="20" viewBox="0 0 20 20"><path d="M12.2 2.79A7.5 7.5 0 1 0 12.9 15.7L12.9 13.65 10.23 12.62A3.5 3.5 0 1 1 10.23 6.28L12.2 5.6Z" fill="#55a0c4"/><path d="M14.55 4.9L14.25 12.9M16.65 4.9L16.35 12.9" stroke="#55a0c4" stroke-width="1.25" stroke-opacity=".7" fill="none"/><path d="M11.8 7.45H18.2" stroke="#55a0c4" stroke-width="1.25" fill="none"/><path d="M11.5 9.95H17.7" stroke="#55a0c4" stroke-width="1.1" stroke-opacity=".8" fill="none"/></svg><span class="nm mo" style="top:1px;letter-spacing:-0.081px">Bootstrapper.cs</span></div>
<div class="row" style="top:942.5px"><svg width="20" height="20" viewBox="0 0 20 20"><path d="M12.2 2.79A7.5 7.5 0 1 0 12.9 15.7L12.9 13.65 10.23 12.62A3.5 3.5 0 1 1 10.23 6.28L12.2 5.6Z" fill="#55a0c4"/><path d="M14.55 4.9L14.25 12.9M16.65 4.9L16.35 12.9" stroke="#55a0c4" stroke-width="1.25" stroke-opacity=".7" fill="none"/><path d="M11.8 7.45H18.2" stroke="#55a0c4" stroke-width="1.25" fill="none"/><path d="M11.5 9.95H17.7" stroke="#55a0c4" stroke-width="1.1" stroke-opacity=".8" fill="none"/></svg><span class="nm u" style="top:1px;letter-spacing:-0.221px">BootstrapperTest.cs</span></div>
<div class="row" style="top:975.5px"><svg width="20" height="20" viewBox="0 0 20 20"><path d="M12.2 2.79A7.5 7.5 0 1 0 12.9 15.7L12.9 13.65 10.23 12.62A3.5 3.5 0 1 1 10.23 6.28L12.2 5.6Z" fill="#55a0c4"/><path d="M14.55 4.9L14.25 12.9M16.65 4.9L16.35 12.9" stroke="#55a0c4" stroke-width="1.25" stroke-opacity=".7" fill="none"/><path d="M11.8 7.45H18.2" stroke="#55a0c4" stroke-width="1.25" fill="none"/><path d="M11.5 9.95H17.7" stroke="#55a0c4" stroke-width="1.1" stroke-opacity=".8" fill="none"/></svg><span class="nm u" style="top:1px;letter-spacing:-0.164px">BottomBarOverlay.cs</span></div>
<div class="row" style="top:1008.5px"><svg width="20" height="20" viewBox="0 0 20 20"><path d="M12.2 2.79A7.5 7.5 0 1 0 12.9 15.7L12.9 13.65 10.23 12.62A3.5 3.5 0 1 1 10.23 6.28L12.2 5.6Z" fill="#55a0c4"/><path d="M14.55 4.9L14.25 12.9M16.65 4.9L16.35 12.9" stroke="#55a0c4" stroke-width="1.25" stroke-opacity=".7" fill="none"/><path d="M11.8 7.45H18.2" stroke="#55a0c4" stroke-width="1.25" fill="none"/><path d="M11.5 9.95H17.7" stroke="#55a0c4" stroke-width="1.1" stroke-opacity=".8" fill="none"/></svg><span class="nm mo" style="top:1px;letter-spacing:-0.314px">BullseyeManager.cs</span></div>
<div class="row" style="top:1041.5px"><svg width="20" height="20" viewBox="0 0 20 20"><path d="M12.2 2.79A7.5 7.5 0 1 0 12.9 15.7L12.9 13.65 10.23 12.62A3.5 3.5 0 1 1 10.23 6.28L12.2 5.6Z" fill="#55a0c4"/><path d="M14.55 4.9L14.25 12.9M16.65 4.9L16.35 12.9" stroke="#55a0c4" stroke-width="1.25" stroke-opacity=".7" fill="none"/><path d="M11.8 7.45H18.2" stroke="#55a0c4" stroke-width="1.25" fill="none"/><path d="M11.5 9.95H17.7" stroke="#55a0c4" stroke-width="1.1" stroke-opacity=".8" fill="none"/></svg><span class="nm mo" style="top:1px;letter-spacing:-0.330px">CameraPanController.cs</span></div>
<div class="row" style="top:1074.5px"><svg width="20" height="20" viewBox="0 0 20 20"><path d="M12.2 2.79A7.5 7.5 0 1 0 12.9 15.7L12.9 13.65 10.23 12.62A3.5 3.5 0 1 1 10.23 6.28L12.2 5.6Z" fill="#55a0c4"/><path d="M14.55 4.9L14.25 12.9M16.65 4.9L16.35 12.9" stroke="#55a0c4" stroke-width="1.25" stroke-opacity=".7" fill="none"/><path d="M11.8 7.45H18.2" stroke="#55a0c4" stroke-width="1.25" fill="none"/><path d="M11.5 9.95H17.7" stroke="#55a0c4" stroke-width="1.1" stroke-opacity=".8" fill="none"/></svg><span class="nm mo" style="top:1px;letter-spacing:-0.100px">CameraZoomController.cs</span></div>
<div class="row" style="top:1107.5px"><svg width="20" height="20" viewBox="0 0 20 20"><path d="M12.2 2.79A7.5 7.5 0 1 0 12.9 15.7L12.9 13.65 10.23 12.62A3.5 3.5 0 1 1 10.23 6.28L12.2 5.6Z" fill="#55a0c4"/><path d="M14.55 4.9L14.25 12.9M16.65 4.9L16.35 12.9" stroke="#55a0c4" stroke-width="1.25" stroke-opacity=".7" fill="none"/><path d="M11.8 7.45H18.2" stroke="#55a0c4" stroke-width="1.25" fill="none"/><path d="M11.5 9.95H17.7" stroke="#55a0c4" stroke-width="1.1" stroke-opacity=".8" fill="none"/></svg><span class="nm mo" style="top:1px;letter-spacing:-0.629px">CasualtyService.cs</span></div>
<div class="row" style="top:1140.5px"><svg width="20" height="20" viewBox="0 0 20 20"><path d="M12.2 2.79A7.5 7.5 0 1 0 12.9 15.7L12.9 13.65 10.23 12.62A3.5 3.5 0 1 1 10.23 6.28L12.2 5.6Z" fill="#55a0c4"/><path d="M14.55 4.9L14.25 12.9M16.65 4.9L16.35 12.9" stroke="#55a0c4" stroke-width="1.25" stroke-opacity=".7" fill="none"/><path d="M11.8 7.45H18.2" stroke="#55a0c4" stroke-width="1.25" fill="none"/><path d="M11.5 9.95H17.7" stroke="#55a0c4" stroke-width="1.1" stroke-opacity=".8" fill="none"/></svg><span class="nm mo" style="top:1px;letter-spacing:-0.516px">ChatGptService.cs</span></div>
<div class="row" style="top:1173.5px"><svg width="20" height="20" viewBox="0 0 20 20"><path d="M12.2 2.79A7.5 7.5 0 1 0 12.9 15.7L12.9 13.65 10.23 12.62A3.5 3.5 0 1 1 10.23 6.28L12.2 5.6Z" fill="#55a0c4"/><path d="M14.55 4.9L14.25 12.9M16.65 4.9L16.35 12.9" stroke="#55a0c4" stroke-width="1.25" stroke-opacity=".7" fill="none"/><path d="M11.8 7.45H18.2" stroke="#55a0c4" stroke-width="1.25" fill="none"/><path d="M11.5 9.95H17.7" stroke="#55a0c4" stroke-width="1.1" stroke-opacity=".8" fill="none"/></svg><span class="nm u" style="top:1px;letter-spacing:-0.307px">CivilianFeatureSettings.cs</span></div>
<div class="row sel" style="top:1206.5px"><svg width="20" height="20" viewBox="0 0 20 20"><path d="M12.2 2.79A7.5 7.5 0 1 0 12.9 15.7L12.9 13.65 10.23 12.62A3.5 3.5 0 1 1 10.23 6.28L12.2 5.6Z" fill="#55a0c4"/><path d="M14.55 4.9L14.25 12.9M16.65 4.9L16.35 12.9" stroke="#55a0c4" stroke-width="1.25" stroke-opacity=".7" fill="none"/><path d="M11.8 7.45H18.2" stroke="#55a0c4" stroke-width="1.25" fill="none"/><path d="M11.5 9.95H17.7" stroke="#55a0c4" stroke-width="1.1" stroke-opacity=".8" fill="none"/></svg><span class="nm se" style="top:1px;letter-spacing:-0.595px">ClockUI.cs</span></div>
<div class="row" style="top:1239.5px"><svg width="20" height="20" viewBox="0 0 20 20"><path d="M12.2 2.79A7.5 7.5 0 1 0 12.9 15.7L12.9 13.65 10.23 12.62A3.5 3.5 0 1 1 10.23 6.28L12.2 5.6Z" fill="#55a0c4"/><path d="M14.55 4.9L14.25 12.9M16.65 4.9L16.35 12.9" stroke="#55a0c4" stroke-width="1.25" stroke-opacity=".7" fill="none"/><path d="M11.8 7.45H18.2" stroke="#55a0c4" stroke-width="1.25" fill="none"/><path d="M11.5 9.95H17.7" stroke="#55a0c4" stroke-width="1.1" stroke-opacity=".8" fill="none"/></svg><span class="nm u" style="top:1px;letter-spacing:-0.228px">ClutterLabelSettings.cs</span></div>
<div class="row" style="top:1272.5px"><svg width="20" height="20" viewBox="0 0 20 20"><path d="M12.2 2.79A7.5 7.5 0 1 0 12.9 15.7L12.9 13.65 10.23 12.62A3.5 3.5 0 1 1 10.23 6.28L12.2 5.6Z" fill="#55a0c4"/><path d="M14.55 4.9L14.25 12.9M16.65 4.9L16.35 12.9" stroke="#55a0c4" stroke-width="1.25" stroke-opacity=".7" fill="none"/><path d="M11.8 7.45H18.2" stroke="#55a0c4" stroke-width="1.25" fill="none"/><path d="M11.5 9.95H17.7" stroke="#55a0c4" stroke-width="1.1" stroke-opacity=".8" fill="none"/></svg><span class="nm u" style="top:1px;letter-spacing:-0.283px">ClutterSystemSettings.cs</span></div>
<div class="row" style="top:1305.5px"><svg width="20" height="20" viewBox="0 0 20 20"><path d="M12.2 2.79A7.5 7.5 0 1 0 12.9 15.7L12.9 13.65 10.23 12.62A3.5 3.5 0 1 1 10.23 6.28L12.2 5.6Z" fill="#55a0c4"/><path d="M14.55 4.9L14.25 12.9M16.65 4.9L16.35 12.9" stroke="#55a0c4" stroke-width="1.25" stroke-opacity=".7" fill="none"/><path d="M11.8 7.45H18.2" stroke="#55a0c4" stroke-width="1.25" fill="none"/><path d="M11.5 9.95H17.7" stroke="#55a0c4" stroke-width="1.1" stroke-opacity=".8" fill="none"/></svg><span class="nm u" style="top:1px;letter-spacing:-0.215px">ContactTypeNamer.cs</span></div>
<div class="row" style="top:1338.5px"><svg width="20" height="20" viewBox="0 0 20 20"><path d="M12.2 2.79A7.5 7.5 0 1 0 12.9 15.7L12.9 13.65 10.23 12.62A3.5 3.5 0 1 1 10.23 6.28L12.2 5.6Z" fill="#55a0c4"/><path d="M14.55 4.9L14.25 12.9M16.65 4.9L16.35 12.9" stroke="#55a0c4" stroke-width="1.25" stroke-opacity=".7" fill="none"/><path d="M11.8 7.45H18.2" stroke="#55a0c4" stroke-width="1.25" fill="none"/><path d="M11.5 9.95H17.7" stroke="#55a0c4" stroke-width="1.1" stroke-opacity=".8" fill="none"/></svg><span class="nm u" style="top:1px;letter-spacing:-0.312px">CornerMarkers.cs</span></div>
<div class="row" style="top:1371.5px"><svg width="20" height="20" viewBox="0 0 20 20"><path d="M12.2 2.79A7.5 7.5 0 1 0 12.9 15.7L12.9 13.65 10.23 12.62A3.5 3.5 0 1 1 10.23 6.28L12.2 5.6Z" fill="#55a0c4"/><path d="M14.55 4.9L14.25 12.9M16.65 4.9L16.35 12.9" stroke="#55a0c4" stroke-width="1.25" stroke-opacity=".7" fill="none"/><path d="M11.8 7.45H18.2" stroke="#55a0c4" stroke-width="1.25" fill="none"/><path d="M11.5 9.95H17.7" stroke="#55a0c4" stroke-width="1.1" stroke-opacity=".8" fill="none"/></svg><span class="nm mo" style="top:1px;letter-spacing:-0.341px">CustomAirwaysRenderer.cs</span></div>
<div class="row" style="top:1404.5px"><svg width="20" height="20" viewBox="0 0 20 20"><path d="M12.2 2.79A7.5 7.5 0 1 0 12.9 15.7L12.9 13.65 10.23 12.62A3.5 3.5 0 1 1 10.23 6.28L12.2 5.6Z" fill="#55a0c4"/><path d="M14.55 4.9L14.25 12.9M16.65 4.9L16.35 12.9" stroke="#55a0c4" stroke-width="1.25" stroke-opacity=".7" fill="none"/><path d="M11.8 7.45H18.2" stroke="#55a0c4" stroke-width="1.25" fill="none"/><path d="M11.5 9.95H17.7" stroke="#55a0c4" stroke-width="1.1" stroke-opacity=".8" fill="none"/></svg><span class="nm mo" style="top:1px;letter-spacing:-0.329px">CustomCursor.cs</span></div>
<div class="row" style="top:1437.5px"><svg width="20" height="20" viewBox="0 0 20 20"><path d="M12.2 2.79A7.5 7.5 0 1 0 12.9 15.7L12.9 13.65 10.23 12.62A3.5 3.5 0 1 1 10.23 6.28L12.2 5.6Z" fill="#55a0c4"/><path d="M14.55 4.9L14.25 12.9M16.65 4.9L16.35 12.9" stroke="#55a0c4" stroke-width="1.25" stroke-opacity=".7" fill="none"/><path d="M11.8 7.45H18.2" stroke="#55a0c4" stroke-width="1.25" fill="none"/><path d="M11.5 9.95H17.7" stroke="#55a0c4" stroke-width="1.1" stroke-opacity=".8" fill="none"/></svg><span class="nm mo" style="top:1px;letter-spacing:-0.116px">CustomMapOutlineRenderer.cs</span></div>
<div class="row" style="top:1470.5px"><svg width="20" height="20" viewBox="0 0 20 20"><path d="M12.2 2.79A7.5 7.5 0 1 0 12.9 15.7L12.9 13.65 10.23 12.62A3.5 3.5 0 1 1 10.23 6.28L12.2 5.6Z" fill="#55a0c4"/><path d="M14.55 4.9L14.25 12.9M16.65 4.9L16.35 12.9" stroke="#55a0c4" stroke-width="1.25" stroke-opacity=".7" fill="none"/><path d="M11.8 7.45H18.2" stroke="#55a0c4" stroke-width="1.25" fill="none"/><path d="M11.5 9.95H17.7" stroke="#55a0c4" stroke-width="1.1" stroke-opacity=".8" fill="none"/></svg><span class="nm mo" style="top:1px;letter-spacing:-0.082px">DatablockManager.cs</span></div>
<div class="row" style="top:1503.5px"><svg width="20" height="20" viewBox="0 0 20 20"><path d="M12.2 2.79A7.5 7.5 0 1 0 12.9 15.7L12.9 13.65 10.23 12.62A3.5 3.5 0 1 1 10.23 6.28L12.2 5.6Z" fill="#55a0c4"/><path d="M14.55 4.9L14.25 12.9M16.65 4.9L16.35 12.9" stroke="#55a0c4" stroke-width="1.25" stroke-opacity=".7" fill="none"/><path d="M11.8 7.45H18.2" stroke="#55a0c4" stroke-width="1.25" fill="none"/><path d="M11.5 9.95H17.7" stroke="#55a0c4" stroke-width="1.1" stroke-opacity=".8" fill="none"/></svg><span class="nm mo" style="top:1px;letter-spacing:-0.121px">DatalinkL11Manager.cs</span></div>
<div class="row" style="top:1536.5px"><svg width="20" height="20" viewBox="0 0 20 20"><path d="M12.2 2.79A7.5 7.5 0 1 0 12.9 15.7L12.9 13.65 10.23 12.62A3.5 3.5 0 1 1 10.23 6.28L12.2 5.6Z" fill="#55a0c4"/><path d="M14.55 4.9L14.25 12.9M16.65 4.9L16.35 12.9" stroke="#55a0c4" stroke-width="1.25" stroke-opacity=".7" fill="none"/><path d="M11.8 7.45H18.2" stroke="#55a0c4" stroke-width="1.25" fill="none"/><path d="M11.5 9.95H17.7" stroke="#55a0c4" stroke-width="1.1" stroke-opacity=".8" fill="none"/></svg><span class="nm u" style="top:1px;letter-spacing:-0.193px">DatalinkL16Manager.cs</span></div>
<div class="row" style="top:1569.5px"><svg width="20" height="20" viewBox="0 0 20 20"><path d="M12.2 2.79A7.5 7.5 0 1 0 12.9 15.7L12.9 13.65 10.23 12.62A3.5 3.5 0 1 1 10.23 6.28L12.2 5.6Z" fill="#55a0c4"/><path d="M14.55 4.9L14.25 12.9M16.65 4.9L16.35 12.9" stroke="#55a0c4" stroke-width="1.25" stroke-opacity=".7" fill="none"/><path d="M11.8 7.45H18.2" stroke="#55a0c4" stroke-width="1.25" fill="none"/><path d="M11.5 9.95H17.7" stroke="#55a0c4" stroke-width="1.1" stroke-opacity=".8" fill="none"/></svg><span class="nm u" style="top:1px;letter-spacing:-0.061px">DebugClutterCommand.cs</span></div>
<div class="row" style="top:1602.5px"><svg width="20" height="20" viewBox="0 0 20 20"><path d="M12.2 2.79A7.5 7.5 0 1 0 12.9 15.7L12.9 13.65 10.23 12.62A3.5 3.5 0 1 1 10.23 6.28L12.2 5.6Z" fill="#55a0c4"/><path d="M14.55 4.9L14.25 12.9M16.65 4.9L16.35 12.9" stroke="#55a0c4" stroke-width="1.25" stroke-opacity=".7" fill="none"/><path d="M11.8 7.45H18.2" stroke="#55a0c4" stroke-width="1.25" fill="none"/><path d="M11.5 9.95H17.7" stroke="#55a0c4" stroke-width="1.1" stroke-opacity=".8" fill="none"/></svg><span class="nm u" style="top:1px;letter-spacing:-0.242px">DiagnosticsSettings.cs</span></div>
<div class="row" style="top:1635.5px"><svg width="20" height="20" viewBox="0 0 20 20"><path d="M12.2 2.79A7.5 7.5 0 1 0 12.9 15.7L12.9 13.65 10.23 12.62A3.5 3.5 0 1 1 10.23 6.28L12.2 5.6Z" fill="#55a0c4"/><path d="M14.55 4.9L14.25 12.9M16.65 4.9L16.35 12.9" stroke="#55a0c4" stroke-width="1.25" stroke-opacity=".7" fill="none"/><path d="M11.8 7.45H18.2" stroke="#55a0c4" stroke-width="1.25" fill="none"/><path d="M11.5 9.95H17.7" stroke="#55a0c4" stroke-width="1.1" stroke-opacity=".8" fill="none"/></svg><span class="nm ig2" style="top:1px;letter-spacing:-0.118px">DirectLaunchController.cs</span></div>
</div>
<div class="sg" style="left:30px;background:rgba(255,255,255,.09)"></div>
<div class="sg" style="left:42px;width:1px;background:rgba(255,255,255,.28)"></div>
</div>
</body></html>
